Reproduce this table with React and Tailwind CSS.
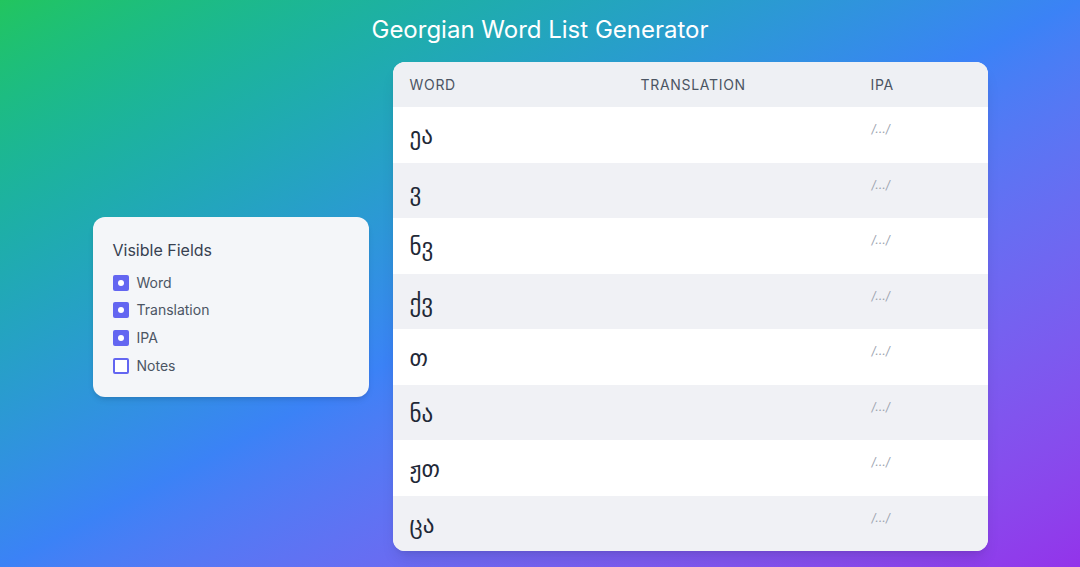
import React from "react";

const rows = ["ეა", "ვ", "ნვ", "ქვ", "თ", "ნა", "ჟთ", "ცა"];
const fields = [
  { label: "Word", on: true },
  { label: "Translation", on: true },
  { label: "IPA", on: true },
  { label: "Notes", on: false },
];

export default function App() {
  return (
    <div
      className="w-[1080px] h-[567px] overflow-hidden bg-gradient-to-br from-[#22c55e] via-[#3b82f6] to-[#9333ea] flex flex-col items-center"
      style={{ fontFamily: "Inter, 'Noto Sans', 'DejaVu Sans', sans-serif" }}
    >
      <h1 className="mt-[15px] text-[24px] leading-[30px] text-white font-normal">
        Georgian Word List Generator
      </h1>
      <div className="mt-[17px] flex items-center gap-6">
        <div className="w-[276px] h-[180px] rounded-xl bg-[#f4f6f9] shadow-md px-5 pt-[21px]">
          <div className="text-[16px] leading-6 text-[#374151]">Visible Fields</div>
          <div className="mt-[11px] flex flex-col gap-[7.7px]">
            {fields.map((f) => (
              <div key={f.label} className="flex items-center gap-2 h-[20px]">
                {f.on ? (
                  <span className="w-4 h-4 rounded-[2px] bg-[#6366f1] flex items-center justify-center">
                    <span className="w-[6px] h-[6px] rounded-full bg-white" />
                  </span>
                ) : (
                  <span className="w-4 h-4 rounded-[2px] border-2 border-[#6366f1] bg-white" />
                )}
                <span className="text-[14px] leading-5 text-[#4b5563]">{f.label}</span>
              </div>
            ))}
          </div>
        </div>
        <div className="w-[595px] rounded-xl overflow-hidden bg-white shadow-lg">
          <div className="grid grid-cols-[231px_230px_1fr] h-[45px] items-center bg-[#eef0f4] text-[14px] tracking-wider text-[#4b5563] uppercase">
            <div className="pl-[17px]">Word</div>
            <div className="pl-[17px]">Translation</div>
            <div className="pl-[17px]">IPA</div>
          </div>
          {rows.map((w, i) => (
            <div
              key={i}
              className={`grid grid-cols-[231px_230px_1fr] h-[55.5px] ${
                i % 2 === 1 ? "bg-[#f0f1f5]" : "bg-white"
              }`}
            >
              <div
                className="pl-[17px] pt-[14px] text-[23px] leading-[30px] text-[#1f2937]"
                style={{ fontFamily: "'DejaVu Sans', 'Noto Sans', sans-serif" }}
              >
                {w}
              </div>
              <div className="pl-[17px]" />
              <div className="pl-[18px] pt-[14px] text-[12px] leading-4 italic text-[#9ca3af]">
                /.../
              </div>
            </div>
          ))}
        </div>
      </div>
    </div>
  );
}
